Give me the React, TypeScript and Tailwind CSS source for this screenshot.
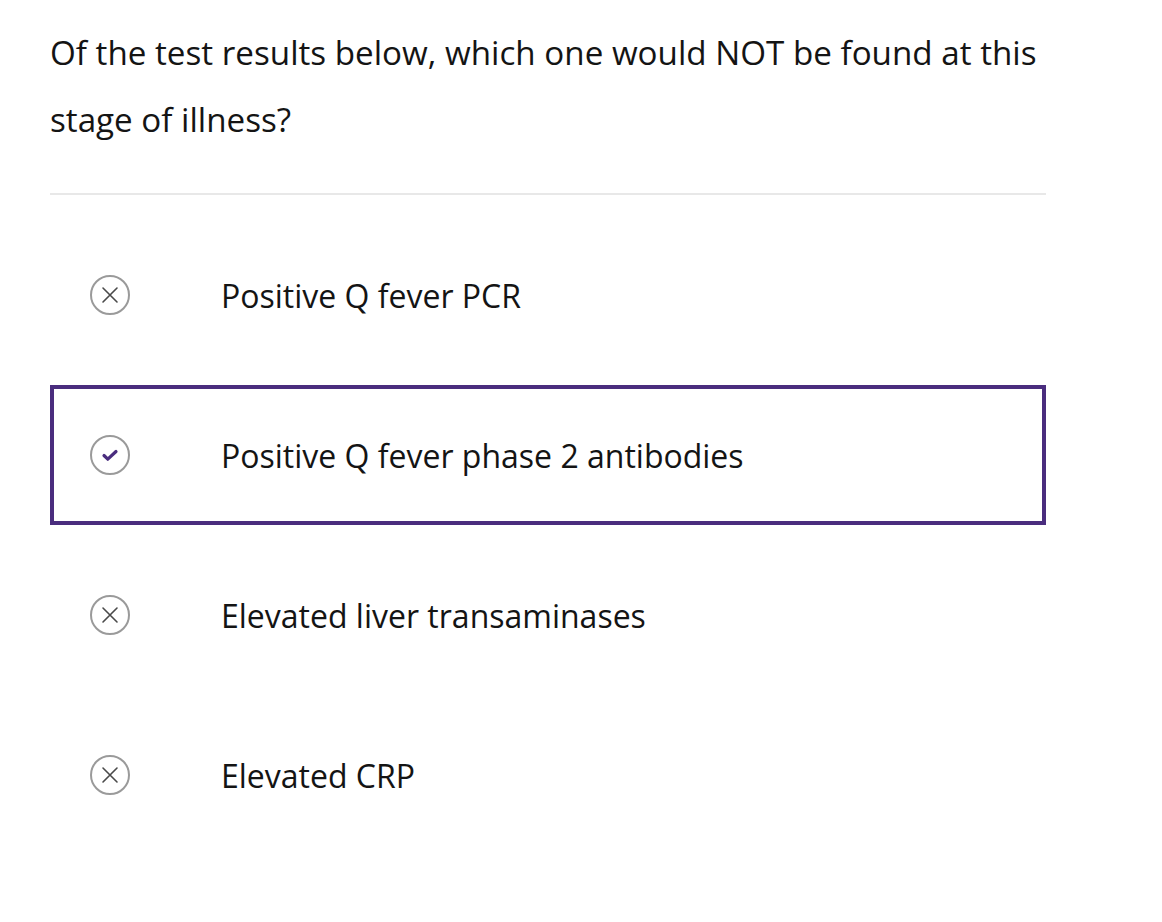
import React from 'react'

const OPTIONS = [
  { label: 'Positive Q fever PCR', selected: false },
  { label: 'Positive Q fever phase 2 antibodies', selected: true },
  { label: 'Elevated liver transaminases', selected: false },
  { label: 'Elevated CRP', selected: false },
]

function CrossIcon() {
  return (
    <svg width="40" height="40" viewBox="0 0 40 40" fill="none">
      <circle cx="20" cy="20" r="19" stroke="#9a9a9a" strokeWidth="2" />
      <path d="M13 13L27 27M27 13L13 27" stroke="#4a4a4a" strokeWidth="1.6" strokeLinecap="round" />
    </svg>
  )
}

function CheckIcon() {
  return (
    <svg width="40" height="40" viewBox="0 0 40 40" fill="none">
      <circle cx="20" cy="20" r="19" stroke="#9a9a9a" strokeWidth="2" />
      <path d="M14 20.5L17.8 24.2L26 16.5" stroke="#4a2d7e" strokeWidth="3.2" strokeLinecap="round" strokeLinejoin="round" />
    </svg>
  )
}

export default function App() {
  return (
    <div className="min-h-screen bg-white font-['Open_Sans',sans-serif] text-[#141414]">
      <div className="w-[996px] ml-[50px] pt-[19px]">
        <h1 className="text-[33.2px] leading-[67px] font-normal">
          Of the test results below, which one would NOT be found at this stage of illness?
        </h1>
        <div className="mt-[40px] h-[2px] bg-[#e8e8e8]" />
        <div className="mt-[30px] flex flex-col gap-[20px]">
          {OPTIONS.map((o) => (
            <div
              key={o.label}
              className={
                'flex h-[140px] items-center border-4 pl-[36px] ' +
                (o.selected ? 'border-[#4a2d7e]' : 'border-transparent')
              }
            >
              <div className="shrink-0">{o.selected ? <CheckIcon /> : <CrossIcon />}</div>
              <span className="ml-[91px] pt-[2px] text-[32px]">{o.label}</span>
            </div>
          ))}
        </div>
      </div>
    </div>
  )
}
